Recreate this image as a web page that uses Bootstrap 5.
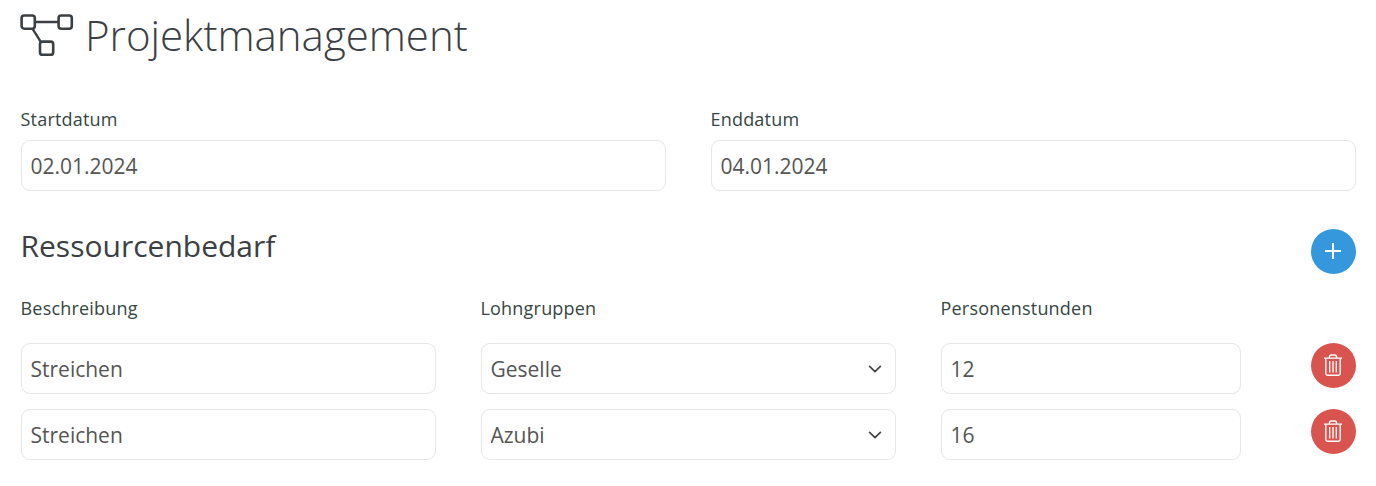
<!DOCTYPE html>
<html lang="de">
<head>
<meta charset="utf-8">
<meta name="viewport" content="width=device-width, initial-scale=1">
<title>Projektmanagement</title>
<link href="https://cdn.jsdelivr.net/npm/bootstrap@5.3.0/dist/css/bootstrap.min.css" rel="stylesheet">
<style>
  body { font-family: "Open Sans", sans-serif; color: #3b4045; background: #fff; overflow: hidden; }
  .page { padding: 7px 20px 0 21px; }
  .page .row { --bs-gutter-x: 45px; }
  .page-title { height: 58px; font-size: 42px; font-weight: 300; line-height: 56px; }
  .page-title svg { margin: 0 11px 0 -1px; }
  .section-title { font-size: 30px; font-weight: 400; line-height: 34px; margin-left: -.5px !important; }
  .form-label { display: block; font-size: 18px; line-height: 24px; letter-spacing: .2px; color: #354644; margin: 0 0 0 -.5px; }
  .form-control, .form-select {
    height: 51px; padding: 1px 9px 0 8.5px; border: 1px solid #e6e6e6; border-radius: 9px;
    font-size: 21px; line-height: 30px; color: #555;
  }
  .form-select {
    background-image: url("data:image/svg+xml,%3Csvg xmlns='http://www.w3.org/2000/svg' viewBox='0 0 14 8'%3E%3Cpath d='M1.6 1.4 7 6.600l5.400-5.200' fill='none' stroke='%23444' stroke-width='1.7' stroke-linecap='round' stroke-linejoin='round'/%3E%3C/svg%3E");
    background-size: 14px 8px; background-position: right 13px center;
  }
  .btn-round { width: 45px; height: 45px; color: #fff; }
  .btn-round svg { margin: 0 1px 1px 0; }
  .btn-add { background: #3598dc; }
  .btn-del { background: #d9534f; }
  .dates { margin-top: 42px; }
  .field-gap { margin-top: 9px; }
  .resources-head { margin-top: 38px; height: 45px; }
  .labels { margin-top: 22px; margin-bottom: 23px; }
  .entries { row-gap: 15px; }
</style>
</head>
<body>
<main class="page">
  <h1 class="page-title d-flex m-0">
    <svg width="54" height="58" viewBox="0 0 54 58" fill="none" stroke="#3b4045" stroke-width="2.6" aria-hidden="true">
      <rect x="1.6" y="8.5" width="13.200" height="13.200" rx="2.6"/>
      <rect x="38.600" y="8.500" width="13.200" height="13.200" rx="2.6"/>
      <rect x="20" y="34.600" width="13.200" height="13.200" rx="2.6"/>
      <path d="M15 15h24M12.600 21.800l8.200 13" stroke-width="2.400"/>
    </svg>
    <span>Projektmanagement</span>
  </h1>

  <form>
    <div class="row dates">
      <div class="col-6">
        <label class="form-label" for="start">Startdatum</label>
        <input class="form-control field-gap" id="start" type="text" value="02.01.2024">
      </div>
      <div class="col-6">
        <label class="form-label" for="end">Enddatum</label>
        <input class="form-control field-gap" id="end" type="text" value="04.01.2024">
      </div>
    </div>

    <div class="resources-head d-flex justify-content-between align-items-start">
      <h2 class="section-title m-0">Ressourcenbedarf</h2>
      <button type="button" class="btn btn-round btn-add rounded-circle border-0 p-0 d-flex align-items-center justify-content-center" aria-label="Hinzufügen">
        <svg width="16" height="16" viewBox="0 0 16 16" stroke="currentColor" stroke-width="2"><path d="M8 0v16M0 8h16"/></svg>
      </button>
    </div>

    <div class="row labels">
      <div class="col-4"><span class="form-label">Beschreibung</span></div>
      <div class="col-4"><span class="form-label">Lohngruppen</span></div>
      <div class="col-3"><span class="form-label">Personenstunden</span></div>
    </div>

    <div class="entries d-flex flex-column">
      <div class="row">
        <div class="col-4"><input class="form-control" type="text" value="Streichen" aria-label="Beschreibung"></div>
        <div class="col-4"><select class="form-select" aria-label="Lohngruppen"><option selected>Geselle</option><option>Azubi</option></select></div>
        <div class="col-3"><input class="form-control" type="text" value="12" aria-label="Personenstunden"></div>
        <div class="col-1 d-flex justify-content-end">
          <button type="button" class="btn btn-round btn-del rounded-circle border-0 p-0 d-flex align-items-center justify-content-center" aria-label="Löschen">
            <svg width="18" height="22" viewBox="0 0 18 22" fill="none" stroke="currentColor" stroke-width="1.35"><path d="M0 4.100h18M5.400 4V3.200Q5.400 1 7.400 1h3.200q2 0 2 2.200V4M1.800 4.200v15.300q0 1.700 1.700 1.700h11q1.700 0 1.700-1.700V4.200M5.700 7v11.500M9 7v11.500M12.300 7v11.500"/></svg>
          </button>
        </div>
      </div>
      <div class="row">
        <div class="col-4"><input class="form-control" type="text" value="Streichen" aria-label="Beschreibung"></div>
        <div class="col-4"><select class="form-select" aria-label="Lohngruppen"><option>Geselle</option><option selected>Azubi</option></select></div>
        <div class="col-3"><input class="form-control" type="text" value="16" aria-label="Personenstunden"></div>
        <div class="col-1 d-flex justify-content-end">
          <button type="button" class="btn btn-round btn-del rounded-circle border-0 p-0 d-flex align-items-center justify-content-center" aria-label="Löschen">
            <svg width="18" height="22" viewBox="0 0 18 22" fill="none" stroke="currentColor" stroke-width="1.35"><path d="M0 4.100h18M5.400 4V3.200Q5.400 1 7.400 1h3.200q2 0 2 2.200V4M1.800 4.200v15.300q0 1.700 1.700 1.700h11q1.700 0 1.700-1.700V4.200M5.700 7v11.500M9 7v11.500M12.300 7v11.500"/></svg>
          </button>
        </div>
      </div>
    </div>
  </form>
</main>
<script src="https://cdn.jsdelivr.net/npm/bootstrap@5.3.0/dist/js/bootstrap.bundle.min.js"></script>
</body>
</html>
